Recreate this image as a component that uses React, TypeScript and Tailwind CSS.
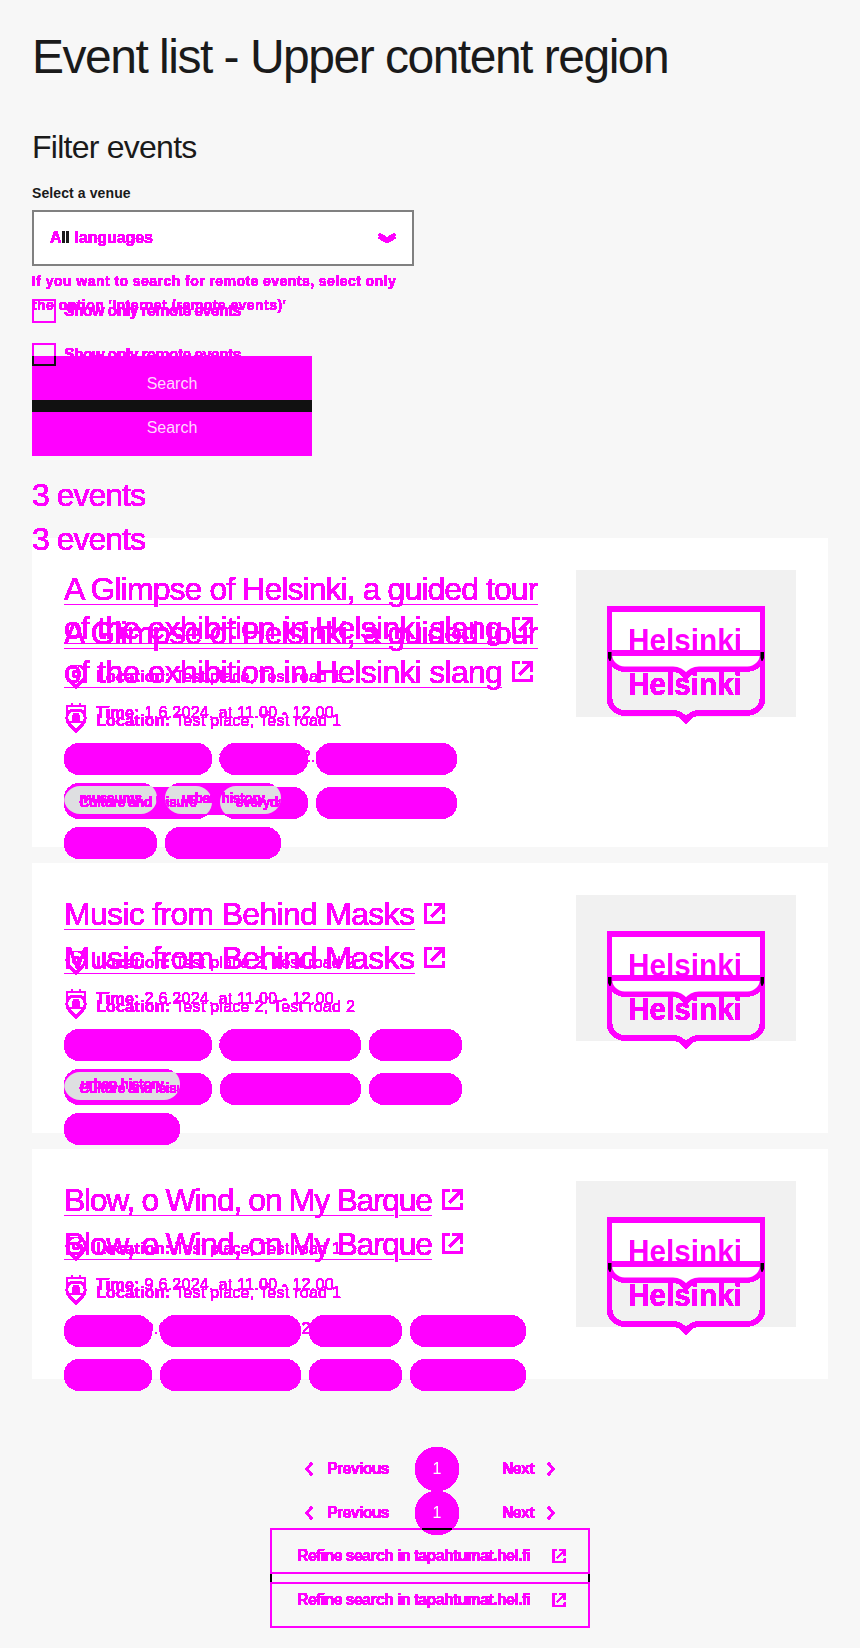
import React from "react";

const magenta = "text-[#ff00ff]";
const crisp = "[filter:url(#crisp)]";

const chipWidths: Record<string, string> = {
  "Culture and leisure": "w-[148px]",
  everyday: "w-[88px]",
  "cultural history": "w-[141px]",
  museums: "w-[93px]",
  "urban history": "w-[116px]",
};

const events = [
  {
    title: [
      { text: "A Glimpse of Helsinki, a guided tour", fit: "tracking-[-0.93px]" },
      { text: "of the exhibition in Helsinki slang", fit: "tracking-[-0.75px]" },
    ],
    place: "Test place, Test road 1",
    time: "1.6.2024, at 11.00 - 12.00",
    tags: ["Culture and leisure", "everyday", "cultural history", "museums", "urban history"],
  },
  {
    title: [{ text: "Music from Behind Masks", fit: "tracking-[-0.7px]" }],
    place: "Test place 2, Test road 2",
    time: "2.6.2024, at 11.00 - 12.00",
    tags: ["Culture and leisure", "cultural history", "museums", "urban history"],
  },
  {
    title: [{ text: "Blow, o Wind, on My Barque", fit: "tracking-[-1.32px]" }],
    place: "Test place, Test road 1",
    time: "9.6.2024, at 11.00 - 12.00",
    tags: ["everyday", "cultural history", "museums", "urban history"],
  },
];

function ExternalIcon({ className }: { className: string }) {
  return (
    <svg viewBox="0 0 24 24" className={className} fill="currentColor">
      <path d="M2 2h7v2.600H4.600v14.800h14.800V16H22v6H2z" />
      <path d="M12 2h10v10h-2.600V6.400L10 15.800l-1.800-1.800 9.400-9.400H12z" />
    </svg>
  );
}

function PinIcon() {
  return (
    <svg viewBox="0 0 24 24" className="w-6 h-6 shrink-0" fill="none" stroke="currentColor" strokeWidth="2">
      <path d="M12 22l-6.500-6.500a9.200 9.200 0 1 1 13 0z" />
      <circle cx="12" cy="9" r="3" />
    </svg>
  );
}

function CalendarIcon() {
  return (
    <svg viewBox="0 0 24 24" className="w-6 h-6 shrink-0" fill="none" stroke="currentColor" strokeWidth="2">
      <path d="M3 5h18v16H3zM3 10h18M8 2v4M16 2v4" />
      <circle cx="12" cy="15" r="2" />
    </svg>
  );
}

function Logo({ ghost }: { ghost?: boolean }) {
  return (
    <svg viewBox="0 0 158 80" className={`mt-[5px] w-[158px] h-[80px] overflow-visible ${crisp}`}>
      <path
        d="M2.500 3H155.500V48a15 15 0 0 1-15 15H92c-6 0-10 3-13 7c-3-4-7-7-13-7H17.500a15 15 0 0 1-15-15Z"
        fill={ghost ? "none" : "#ffffff"}
        stroke="#ff00ff"
        strokeWidth="5"
      />
      <rect x="0" y="0" width="158" height="6" fill="#ff00ff" />
      <text
        x="21"
        y="45"
        fontSize="31"
        fontWeight="700"
        fontFamily="'Liberation Sans', sans-serif"
        fill="#ff00ff"
        textLength="114"
        lengthAdjust="spacingAndGlyphs"
      >
        Helsinki
      </text>
      {ghost && <path d="M1 2h3.500v6l-1 3h-1l-1.500-3zM153.500 2h3.500v6l-1.500 3h-1l-1-3z" fill="#000000" />}
    </svg>
  );
}

function EventCard({ event, ghost }: { event: (typeof events)[number]; ghost?: boolean }) {
  return (
    <article className={`flex justify-between p-8 ${ghost ? "" : "bg-white"}`}>
      <div className={`w-[480px] ${crisp}`}>
        <h3 className="text-[32px] leading-[1.2] underline decoration-1 underline-offset-[4px]">
          {event.title.map((line, i) => (
            <span key={i} className={line.fit}>
              {i > 0 && <br />}
              {line.text}
            </span>
          ))}
          <ExternalIcon className="inline-block w-[25px] h-[25px] ml-[8px] -mt-[5px] align-middle" />
        </h3>
        <div className="mt-[17.6px] flex items-center gap-2 h-6 text-base tracking-[0.28px]">
          <PinIcon />
          <p>
            <span className="font-bold">Location:</span> {event.place}
          </p>
        </div>
        <div className="mt-3 flex items-center gap-2 h-6 text-base tracking-[0.28px]">
          <CalendarIcon />
          <p>
            <span className="font-bold">Time:</span> {event.time}
          </p>
        </div>
        <ul className="mt-[18px] flex flex-wrap gap-2">
          {event.tags.map((tag) => (
            <li
              key={tag}
              className={`h-8 rounded-full bg-[#ff00ff] flex items-center justify-center text-sm font-bold tracking-[-0.5px] ${chipWidths[tag]}`}
            >
              {tag}
            </li>
          ))}
        </ul>
      </div>
      <div className={`w-[220px] h-[146.67px] flex items-center justify-center ${ghost ? "" : "bg-[#f1f1f1]"}`}>
        <Logo ghost={ghost} />
      </div>
    </article>
  );
}

function Listing({ ghost }: { ghost?: boolean }) {
  return (
    <div className={magenta}>
      <label className={`flex items-center gap-2 h-6 text-base ${crisp}`}>
        <span className="w-6 h-6 border-2 border-[#ff00ff] shrink-0" />
        <span className="font-bold tracking-[-0.7px]">Show only remote events</span>
      </label>
      <button className="mt-[33px] block w-[280px] h-14 bg-[#ff00ff] text-[#ffd8ff] text-base font-normal">Search</button>
      <h2 className={`mt-[64px] text-[32px] leading-[38.4px] tracking-[-1px] ${crisp}`}>3 events</h2>
      <div className="mt-6 w-[796px] flex flex-col gap-4">
        {events.map((event) => (
          <EventCard key={event.title[0].text} event={event} ghost={ghost} />
        ))}
      </div>
      <nav className={`mt-[68px] -ml-[32px] w-[860px] flex items-center justify-center text-base font-bold ${crisp}`}>
        <svg viewBox="0 0 8 14" className="w-2 h-3.5" fill="none" stroke="currentColor" strokeWidth="2.2">
          <path d="M7 1L1.500 7l5.500 6" />
        </svg>
        <span className="ml-[14px] w-[62px] tracking-[-0.7px]">Previous</span>
        <span className="ml-[26px] w-11 h-11 rounded-full bg-[#ff00ff] text-white font-normal flex items-center justify-center">1</span>
        <span className="ml-[43px] w-[32px] tracking-[-0.7px]">Next</span>
        <svg viewBox="0 0 8 14" className="ml-[13px] w-2 h-3.5" fill="none" stroke="currentColor" strokeWidth="2.2">
          <path d="M1 1l5.500 6L1 13" />
        </svg>
      </nav>
      <a
        className={`mt-[37px] ml-[238px] w-[320px] h-14 border-2 border-[#ff00ff] flex items-center justify-between pl-[25px] pr-[21px] text-base font-bold ${crisp}`}
      >
        <span className="tracking-[-0.67px]">Refine search in tapahtumat.hel.fi</span>
        <ExternalIcon className="w-[16px] h-[16px]" />
      </a>
    </div>
  );
}

// where the two renderings share the same pixels the chip colour shows through
function ChipOverlap({ className, children, label }: { className: string; children: React.ReactNode; label: string }) {
  return (
    <div className={`absolute h-8 rounded-full overflow-hidden text-sm font-bold tracking-[-0.5px] ${magenta} ${className}`}>
      {children}
      <span className={`absolute inset-0 flex items-center justify-center ${crisp}`}>{label}</span>
    </div>
  );
}

function SharedChip({ className, label }: { className: string; label: string }) {
  return (
    <div className={`absolute top-1 h-8 rounded-full bg-[#dedfe1] flex items-center justify-center ${className}`}>
      <span className={crisp}>{label}</span>
    </div>
  );
}

export default function App() {
  return (
    <div className="relative min-h-[1648px] bg-[#f7f7f7] font-['Liberation_Sans',sans-serif] text-[#1a1a1a] overflow-hidden">
      <svg className="absolute w-0 h-0">
        <filter id="crisp" colorInterpolationFilters="sRGB">
          <feComponentTransfer>
            <feFuncA type="discrete" tableValues="0 1 1 1 1 1 1 1 1 1 1 1 1 1 1 1" />
          </feComponentTransfer>
        </filter>
      </svg>

      <div className="pl-8 pt-[28px]">
        <h1 className="text-[48px] leading-[57.6px] tracking-[-1.5px]">Event list - Upper content region</h1>
        <h2 className="mt-[42px] text-[32px] leading-[38.4px] tracking-[-0.75px]">Filter events</h2>
        <p className="mt-[15px] text-sm font-bold leading-[24px] tracking-[0.1px]">Select a venue</p>
        <div className="mt-[5px] w-[382px] h-14 bg-white border-2 border-[#808080] flex items-center justify-between pl-4 pr-4">
          <span className={`text-base font-bold tracking-[-0.1px] ${magenta} ${crisp}`}>
            A<span className="text-[#1a1a1a]">ll</span> languages
          </span>
          <svg viewBox="0 0 18 10" className={`w-[18px] h-[10px] ${crisp}`} fill="none" stroke="#ff00ff" strokeWidth="2.5">
            <path d="M1 1l8 5 8-5M1 4l8 5 8-5" />
          </svg>
        </div>

        <div className="relative mt-[33px]">
          <p className={`absolute -top-[30px] left-0 w-[382px] text-sm font-bold leading-6 tracking-[0.45px] ${magenta} ${crisp}`}>
            If you want to search for remote events, select only
            <br />
            the option 'Internet (remote events)'
          </p>
          <Listing />
          <div className="absolute top-[44px] left-0 w-full">
            <Listing ghost />
          </div>
        </div>
      </div>

      {/* pixels the two renderings have in common */}
      <div className="absolute left-[32px] top-[400px] w-[280px] h-[12px] bg-[#111111]" />
      <div className="absolute left-[32px] top-[356px] w-6 h-[10px] border-x-2 border-b-2 border-[#111111]" />
      <div className="absolute left-[422px] top-[1528px] w-[30px] h-[2px] bg-black" />
      <div className="absolute left-[270px] top-[1574px] w-[2px] h-2 bg-black" />
      <div className="absolute left-[588px] top-[1574px] w-[2px] h-2 bg-black" />

      <ChipOverlap className="left-[64px] top-[782.4px] w-[93px]" label="museums">
        <SharedChip className="left-0 w-[148px]" label="Culture and leisure" />
      </ChipOverlap>
      <ChipOverlap className="left-[165px] top-[782.4px] w-[116px]" label="urban history">
        <SharedChip className="-left-[101px] w-[148px]" label="Culture and leisure" />
        <SharedChip className="left-[55px] w-[88px]" label="everyday" />
      </ChipOverlap>
      <ChipOverlap className="left-[64px] top-[1068.400px] w-[116px]" label="urban history">
        <SharedChip className="left-0 w-[148px]" label="Culture and leisure" />
      </ChipOverlap>
    </div>
  );
}
